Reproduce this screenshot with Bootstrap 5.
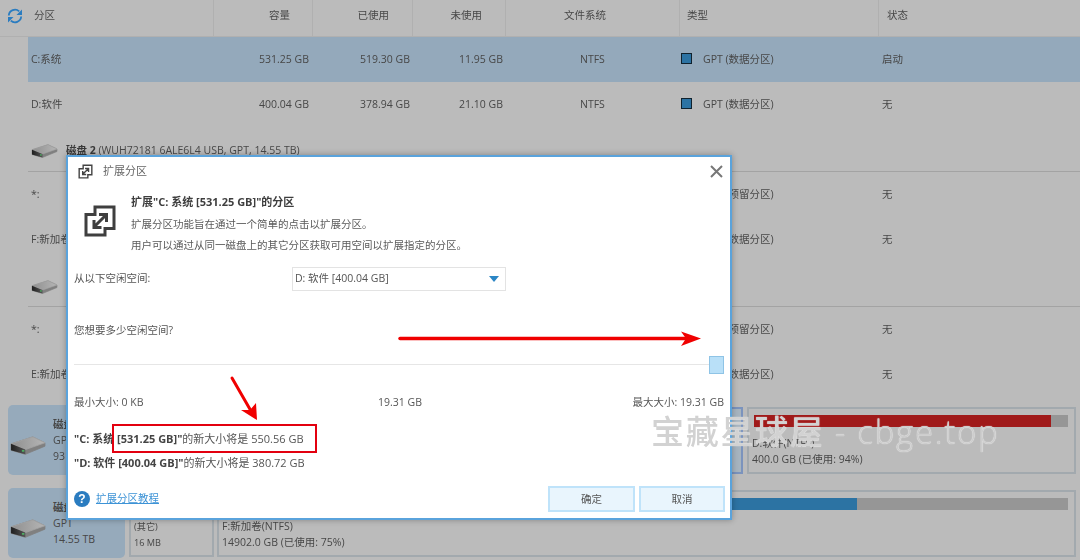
<!DOCTYPE html>
<html lang="zh">
<head>
<meta charset="utf-8">
<title>扩展分区</title>
<link rel="stylesheet" href="https://cdn.jsdelivr.net/npm/bootstrap@5.3.0/dist/css/bootstrap.min.css">
<style>
html,body{width:1080px;height:560px;overflow:hidden}
body{background:#bbb;font-family:"Open Sans","Noto Sans CJK SC",sans-serif;font-size:10.5px;color:#474747;line-height:1.3}
.stage{width:1080px;height:560px;position:relative;overflow:hidden;filter:blur(.4px)}
.hdr{height:37px;border-bottom:1px solid #b0b0b0}
.hdr .cl{height:36px;border-right:1px solid #b0b0b0;padding-bottom:4px}
.cl{display:flex;align-items:center;flex:none}
.refresh{width:34px;padding-left:7px;border-right:0!important}
.c0h{width:180px}.c0{width:182px}
.c1{width:99px;justify-content:flex-end;padding-right:3px}
.c2{width:100px;justify-content:flex-end;padding-right:2px}
.c3{width:93px;justify-content:flex-end;padding-right:2px}
.c4{width:174px;padding-left:75px}
.c5{width:199px;padding-left:2px}
.c6{width:200px;padding-left:4px}
.hdr .c1{padding-right:22px}.hdr .c2,.hdr .c3{padding-right:23px}
.hdr .c4{padding-left:58px}.hdr .c5{padding-left:7px}.hdr .c6{padding-left:8px;border-right:0}
.trow{height:45px;margin-left:28px;padding:1px 0 0 3px}
.sel{background:#94a9bb}
.swatch{width:11px;height:11px;background:#2c73a3;border:1px solid #10222e;margin-right:11px;margin-top:-3px;flex:none}
.diskrow{height:45px;margin-left:28px;border-bottom:1px solid #a3a3a3;padding:3px 0 0 3px;gap:8px}
.diskrow.low{padding-top:6px}
.diskrow b{color:#3a3a3a}
.panels{padding:8px 4px 0 8px;gap:13px}
.prow{height:70px;gap:4px}
.dcard{width:117px;height:70px;background:#96aabb;border-radius:5px;padding:11px 0 0 45px;position:relative;flex:none;line-height:16px}
.dcard svg{position:absolute;left:2px;top:31px}
.pane{border:2px solid #a2a9ae;height:67px;padding:6px 6px 0 3px;margin-top:2px}
.pane.on{border-color:#7b93bd;background:#a7b4bf;width:614px;flex:none}
.pane.grow{flex:1 1 auto;min-width:0}
.pane.small{width:85px;flex:none;margin-right:-1px}
.meter{height:12px;background:#969696;margin:0 0 9px 2px}
.meter i{display:block;height:100%}
.pane p{margin:0;line-height:15.5px}
.dlg{position:absolute;left:66px;top:155px;width:666px;height:365px;background:#fff;border:2px solid #5aa3dc;box-shadow:0 0 6px rgba(0,0,0,.3);color:#555;padding:0 6px}
.dlg-t{height:29px;padding-left:4px;gap:10px;font-size:11px;color:#666}
.dlg-x{margin-left:auto;margin-right:1px}
.intro{padding:7px 0 0 10px;gap:15px;height:81px}
.intro h6{font-size:11px;font-weight:700;margin:1px 0 6px;color:#3e3e3e;line-height:16px}
.intro p{margin:0 0 5px;line-height:16px;color:#5a5a5a}
.bigicon{margin-top:12px;flex:none}
.sel-row{height:24px}
.sel-row span{width:218px}
.fake-sel{width:214px;height:24px;border:1px solid #e3e3e3;padding:0 6px 0 2px;color:#555}
.tri{margin-left:auto;width:0;height:0;border-left:5px solid transparent;border-right:5px solid transparent;border-top:6px solid #2b86c5}
.ask{margin:31px 0 0;height:16px;line-height:16px}
.slide{position:relative;height:20px;margin-top:18px}
.slide::before{content:"";position:absolute;left:0;right:0;top:8px;height:1px;background:#e6e6e6}
.thumb{position:absolute;right:0;top:0;width:15px;height:18px;background:#b9e0f8;border:1px solid #8fc4e6}
.sizes{margin-top:18px;height:16px;line-height:16px}
.mid{position:absolute;left:304px}
.res{margin:21px 0 0;line-height:16px;height:16px;font-size:11px}
.res+.res{margin-top:8px}
.res b{color:#444}
.foot{position:absolute;left:6px;right:5px;bottom:6px;height:26px}
.help{width:16px;height:16px;border-radius:50%;background:#2a7cc0;color:#fff;font-weight:700;font-size:12px;line-height:16px;text-align:center;margin-right:6px;font-family:"Liberation Sans",sans-serif}
.foot a{color:#3d93d6;text-decoration:underline}
.dbtn{width:87px;height:26px;background:#e9f5fd;border:2px solid #bfe3fa;border-radius:0;font-size:10.5px;color:#555;padding:0;line-height:1}
.dbtn+.dbtn{width:86px;margin-left:4px}
.redbox{position:absolute;left:112px;top:424px;width:205px;height:29px;border:2px solid #e3000f;pointer-events:none}
.marks{position:absolute;left:0;top:0}
.wm{position:absolute;left:651px;top:410px;font-size:33px;font-weight:500;letter-spacing:1.7px;line-height:44px;white-space:nowrap;color:#d2d2d2;text-shadow:0 0 1px #fff}
.wm span{font-weight:300;color:#cdcdcd}
</style>
</head>
<body>
<div class="stage">
  <svg width="0" height="0" class="position-absolute"><defs>
    <linearGradient id="dtop" x1="0" y1="0" x2="1" y2="0"><stop offset="0" stop-color="#8f8f8f"/><stop offset="1" stop-color="#b5b5b5"/></linearGradient>
    <linearGradient id="dfront" x1="0" y1="0" x2="1" y2="0"><stop offset="0" stop-color="#1f1f1f"/><stop offset="1" stop-color="#555"/></linearGradient>
    <symbol id="disk" viewBox="0 0 26 14"><path d="M.5 5.800 16.500 .7 25.500 5 25.500 7.500 11 13.500 .5 10.500z" fill="#808080" stroke="#808080" stroke-width=".6" stroke-linejoin="round"/><path d="M.5 5.800 16.500 .7 25.500 5 11 10z" fill="url(#dtop)" stroke="#a5a5a5" stroke-width=".6" stroke-linejoin="round"/><path d="M.5 5.800 11 10V13.500L.5 10.500z" fill="url(#dfront)"/><rect x="8.500" y="10.300" width="1.800" height="1.300" fill="#4fae63"/></symbol>
  </defs></svg>
  <div class="hdr d-flex">
    <div class="cl refresh"><svg width="16" height="16" viewBox="0 0 16 16" fill="none" stroke="#2a7cc0" stroke-width="1.800"><path d="M1.800 7.500A6.200 6.200 0 0 1 12.200 3.400"/><path d="M14.200 8.500A6.200 6.200 0 0 1 3.800 12.600"/><path d="M15 1.500V7H9.500Z" fill="#2a7cc0" stroke="none"/><path d="M1 14.500V9H6.500Z" fill="#2a7cc0" stroke="none"/></svg></div>
    <div class="cl c0h">分区</div>
    <div class="cl c1">容量</div>
    <div class="cl c2">已使用</div>
    <div class="cl c3">未使用</div>
    <div class="cl c4">文件系统</div>
    <div class="cl c5">类型</div>
    <div class="cl c6">状态</div>
  </div>
  <div class="trow sel d-flex">
    <div class="cl c0">C:系统</div><div class="cl c1">531.25 GB</div><div class="cl c2">519.30 GB</div><div class="cl c3">11.95 GB</div><div class="cl c4">NTFS</div><div class="cl c5"><span class="swatch"></span>GPT (数据分区)</div><div class="cl c6">启动</div>
  </div>
  <div class="trow d-flex">
    <div class="cl c0">D:软件</div><div class="cl c1">400.04 GB</div><div class="cl c2">378.94 GB</div><div class="cl c3">21.10 GB</div><div class="cl c4">NTFS</div><div class="cl c5"><span class="swatch"></span>GPT (数据分区)</div><div class="cl c6">无</div>
  </div>
  <div class="diskrow d-flex align-items-center">
    <svg width="27" height="14"><use href="#disk"/></svg>
    <span><b>磁盘 2</b> (WUH72181 6ALE6L4 USB, GPT, 14.55 TB)</span>
  </div>
  <div class="trow d-flex"><div class="cl c0">*:</div><div class="cl c1"></div><div class="cl c2"></div><div class="cl c3"></div><div class="cl c4"></div><div class="cl c5"><span class="swatch"></span>GPT (预留分区)</div><div class="cl c6">无</div></div>
  <div class="trow d-flex"><div class="cl c0">F:新加卷</div><div class="cl c1"></div><div class="cl c2"></div><div class="cl c3"></div><div class="cl c4"></div><div class="cl c5"><span class="swatch"></span>GPT (数据分区)</div><div class="cl c6">无</div></div>
  <div class="diskrow low d-flex align-items-center">
    <svg width="27" height="14"><use href="#disk"/></svg>
    <span><b>磁盘 3</b></span>
  </div>
  <div class="trow d-flex"><div class="cl c0">*:</div><div class="cl c1"></div><div class="cl c2"></div><div class="cl c3"></div><div class="cl c4"></div><div class="cl c5"><span class="swatch"></span>GPT (预留分区)</div><div class="cl c6">无</div></div>
  <div class="trow d-flex"><div class="cl c0">E:新加卷</div><div class="cl c1"></div><div class="cl c2"></div><div class="cl c3"></div><div class="cl c4"></div><div class="cl c5"><span class="swatch"></span>GPT (数据分区)</div><div class="cl c6">无</div></div>

  <div class="panels d-flex flex-column">
    <div class="prow d-flex">
      <div class="dcard"><b>磁盘 1</b><br>GPT<br>931 GB
        <svg width="36" height="19"><use href="#disk"/></svg></div>
      <div class="pane on"></div>
      <div class="pane grow"><div class="meter"><i style="width:94.500%;background:#a01a1a"></i></div><p>D:软件(NTFS)</p><p>400.0 GB (已使用: 94%)</p></div>
    </div>
    <div class="prow d-flex">
      <div class="dcard"><b>磁盘 2</b><br>GPT<br>14.55 TB
        <svg width="36" height="19"><use href="#disk"/></svg></div>
      <div class="pane small"><div class="meter"></div><p>(其它)</p><p>16 MB</p></div>
      <div class="pane grow"><div class="meter"><i style="width:75%;background:#2c73a3"></i></div><p>F:新加卷(NTFS)</p><p>14902.0 GB (已使用: 75%)</p></div>
    </div>
  </div>

  <div class="dlg">
    <div class="dlg-t d-flex align-items-center">
      <svg width="15" height="15" viewBox="0 0 32 32" fill="none" stroke="#444" stroke-width="3"><path d="M11 2.500H29.500V23H21V29.500H2.500V10H11Z"/><path d="M10 22 22 10M15 9.500H22.500V17M10 15V22.500H17.500"/></svg>
      <span>扩展分区</span>
      <svg class="dlg-x" width="13" height="13" viewBox="0 0 13 13" stroke="#777" stroke-width="2"><path d="M1 1 12 12M12 1 1 12"/></svg>
    </div>
    <div class="intro d-flex">
      <svg class="bigicon" width="32" height="32" viewBox="0 0 32 32" fill="none" stroke="#3f3f3f" stroke-width="3"><path d="M11 2H30V23.500H21V30H2V9.500H11Z"/><path d="M10 22 22 10M15 9.500H22.500V17M10 15V22.500H17.500"/></svg>
      <div>
        <h6>扩展"C: 系统 [531.25 GB]"的分区</h6>
        <p>扩展分区功能旨在通过一个简单的点击以扩展分区。</p>
        <p>用户可以通过从同一磁盘上的其它分区获取可用空间以扩展指定的分区。</p>
      </div>
    </div>
    <div class="sel-row d-flex align-items-center">
      <span>从以下空闲空间:</span>
      <div class="fake-sel d-flex align-items-center">D: 软件 [400.04 GB]<i class="tri"></i></div>
    </div>
    <p class="ask">您想要多少空闲空间?</p>
    <div class="slide"><div class="thumb"></div></div>
    <div class="sizes d-flex justify-content-between position-relative"><span>最小大小: 0 KB</span><span class="mid">19.31 GB</span><span>最大大小: 19.31 GB</span></div>
    <p class="res"><b>"C: 系统 [531.25 GB]"</b>的新大小将是 550.56 GB</p>
    <p class="res"><b>"D: 软件 [400.04 GB]"</b>的新大小将是 380.72 GB</p>
    <div class="foot d-flex align-items-center">
      <span class="help">?</span><a href="#">扩展分区教程</a>
      <button type="button" class="btn dbtn ms-auto">确定</button>
      <button type="button" class="btn dbtn">取消</button>
    </div>
  </div>

  <div class="redbox"></div>
  <svg class="marks" width="1080" height="560" viewBox="0 0 1080 560">
    <path d="M400 338.500H687" stroke="#f00000" stroke-width="3.500" stroke-linecap="round"/>
    <path d="M701 338.500 681 331.500 686 338.500 681 346Z" fill="#f00000"/>
    <path d="M232 378 251 411" stroke="#f00000" stroke-width="3" stroke-linecap="round"/>
    <path d="M257 420 256 403 250 410 241 410Z" fill="#f00000"/>
  </svg>
  <div class="wm">宝藏星球屋 <span>- cbge.top</span></div>
</div>
<script src="https://cdn.jsdelivr.net/npm/bootstrap@5.3.0/dist/js/bootstrap.bundle.min.js"></script>
</body>
</html>
